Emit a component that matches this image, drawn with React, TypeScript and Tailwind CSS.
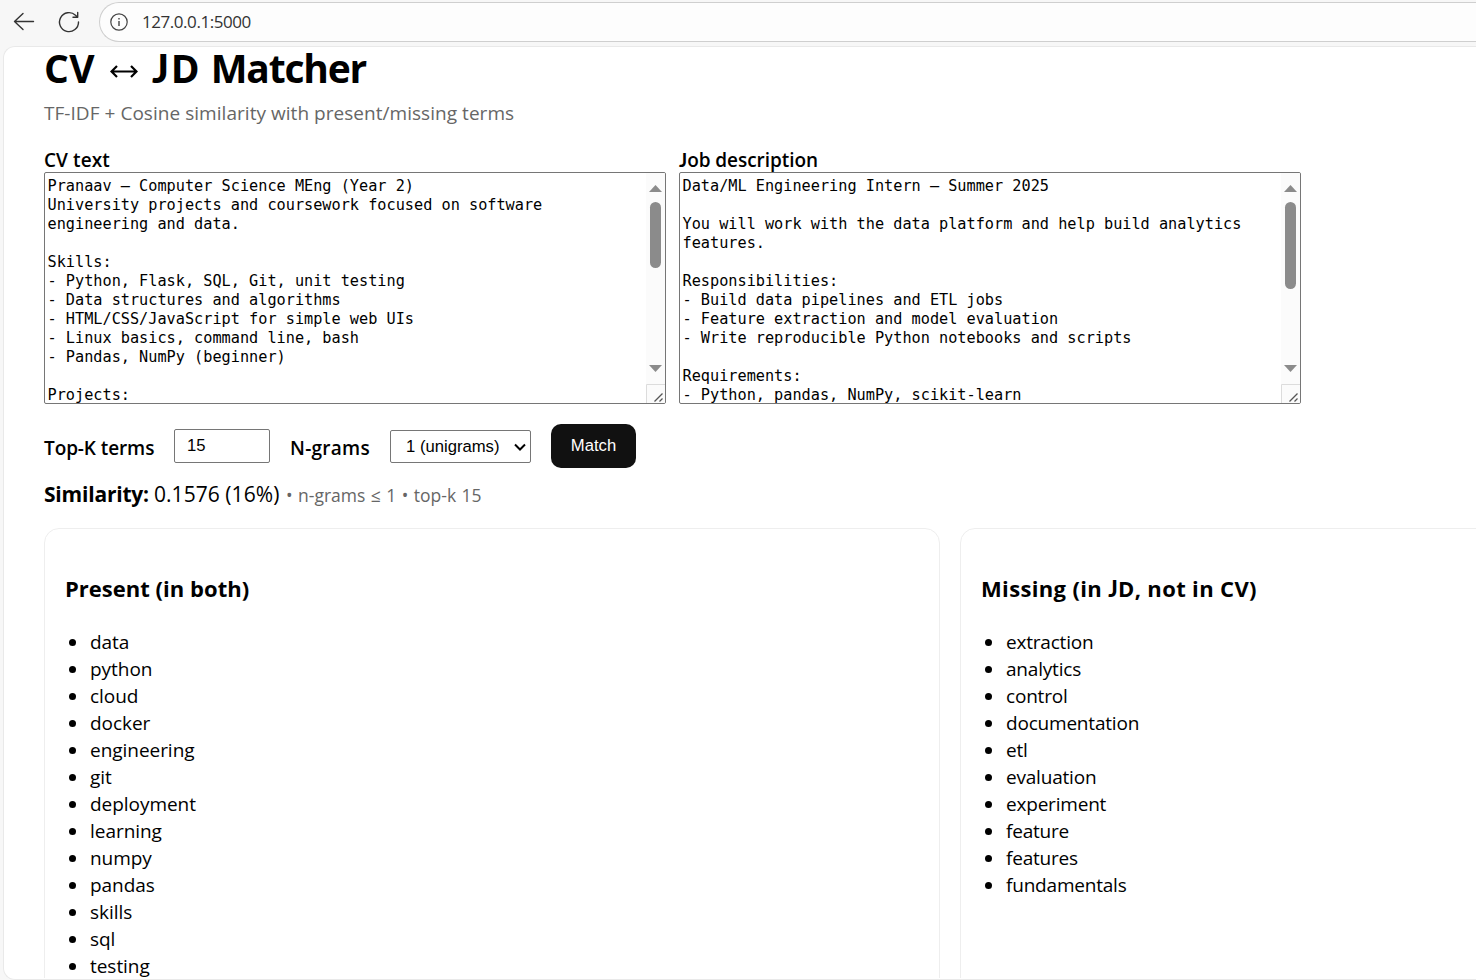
const present = ["data", "python", "cloud", "docker", "engineering", "git", "deployment", "learning", "numpy", "pandas", "skills", "sql", "testing"];
const missing = ["extraction", "analytics", "control", "documentation", "etl", "evaluation", "experiment", "feature", "features", "fundamentals"];

const cvText = `Pranaav – Computer Science MEng (Year 2)
University projects and coursework focused on software
engineering and data.

Skills:
- Python, Flask, SQL, Git, unit testing
- Data structures and algorithms
- HTML/CSS/JavaScript for simple web UIs
- Linux basics, command line, bash
- Pandas, NumPy (beginner)

Projects:`;

const jdText = `Data/ML Engineering Intern – Summer 2025

You will work with the data platform and help build analytics
features.

Responsibilities:
- Build data pipelines and ETL jobs
- Feature extraction and model evaluation
- Write reproducible Python notebooks and scripts

Requirements:
- Python, pandas, NumPy, scikit-learn`;

// A capital J that stays on the baseline, as the other capitals do.
function BaselineJ({ weight }: { weight: string }) {
  return <span className={`font-['Lato',sans-serif] leading-none ${weight}`}>J</span>;
}

function Heading({ text, weight }: { text: string; weight: string }) {
  const at = text.indexOf("J");
  if (at < 0) return <>{text}</>;
  return <>{text.slice(0, at)}<BaselineJ weight={weight} />{text.slice(at + 1)}</>;
}

function TextBox({ label, text, thumb, labelClass }: { label: string; text: string; thumb: string; labelClass: string }) {
  return (
    <div className="w-[622px]">
      <div className={`h-[24px] text-[19px] leading-[25px] font-semibold ${labelClass}`}><Heading text={label} weight="font-bold" /></div>
      <div className="flex h-[232px] overflow-hidden rounded-[2px] border border-[#767676] bg-white">
        <pre className="h-[230px] flex-1 overflow-hidden pt-[4px] pl-[2.5px] font-['DejaVu_Sans_Mono',monospace] text-[15.22px] leading-[19px]">{text}</pre>
        <div className="flex w-[19px] flex-col items-center bg-[#fbfbfb]">
          <svg className="mt-[12px] h-[7px] w-[13px] shrink-0" viewBox="0 0 13 7"><path d="M6.5 0 13 7H0z" fill="#8b8b8b" /></svg>
          <div className={`mt-[10px] w-[11px] shrink-0 rounded-full bg-[#8b8b8b] ${thumb}`} />
          <div className="flex-1" />
          <svg className="mb-[12px] h-[7px] w-[13px] shrink-0" viewBox="0 0 13 7"><path d="M0 0h13L6.5 7z" fill="#8b8b8b" /></svg>
          <svg className="h-[19px] w-[19px] shrink-0" viewBox="0 0 19 19" fill="none">
            <path d="M0.5 19V0.5H19" stroke="#dcdcdc" />
            <path d="M8.5 17.5 16.5 9.5M13.5 17.5 16.5 14.5" stroke="#555" strokeWidth="1.3" />
          </svg>
        </div>
      </div>
    </div>
  );
}

function Card({ title, items, titleClass, listClass }: { title: string; items: string[]; titleClass: string; listClass: string }) {
  return (
    <section className="h-[520px] rounded-[15px] border border-[#eeeeee] pt-[43px] pl-5">
      <h3 className={`h-[32px] text-[22px] leading-[32px] font-bold ${titleClass}`}><Heading text={title} weight="font-black" /></h3>
      <ul className={`mt-[25px] text-[19px] leading-[27px] ${listClass}`}>
        {items.map((item) => (
          <li key={item} className="flex items-center">
            <span className="mr-[14px] ml-[4px] h-[7px] w-[7px] rounded-full bg-black" />
            <span>{item}</span>
          </li>
        ))}
      </ul>
    </section>
  );
}

export default function App() {
  return (
    <div className="h-[980px] w-[1476px] overflow-hidden bg-[#f7f7f7] font-['Open_Sans','Noto_Sans',sans-serif] text-black">
      <header className="flex h-[46px] items-start">
        <svg className="mt-[10px] ml-[12px] h-6 w-6" viewBox="0 0 24 24" fill="none" stroke="#333" strokeWidth="1.4" strokeLinecap="round" strokeLinejoin="round">
          <path d="M21.5 11.5H2.5M11 3.5 2.5 11.5 11 19.5" />
        </svg>
        <svg className="mt-[10px] ml-[21px] h-6 w-6" viewBox="0 0 24 24" fill="none" stroke="#333" strokeWidth="1.4" strokeLinecap="round" strokeLinejoin="round">
          <path d="M21.5 12A9.5 9.5 0 1 1 18.5 5.2L20.5 7M20.7 2.5V7.2H16" />
        </svg>
        <div className="mt-[2px] ml-[18px] flex h-[40px] flex-1 items-center rounded-l-full border border-r-0 border-[#cfcfcf] bg-[#fdfdfd] pl-[10px]">
          <svg className="h-[18px] w-[18px]" viewBox="0 0 18 18" fill="none" stroke="#444" strokeWidth="1.2">
            <circle cx="9" cy="9" r="8.2" /><path d="M9 8v5" strokeWidth="1.4" /><path d="M9 5v1.5" strokeWidth="1.4" />
          </svg>
          <span className="ml-[14px] text-[17px] tracking-[-0.45px] text-[#333]">127.0.0.1:5000</span>
        </div>
      </header>
      <main className="ml-[3px] h-[934px] w-[1473px] rounded-l-[12px] border border-r-0 border-[#e9e9e9] bg-white pl-10">
        <h1 className="flex h-[50px] items-baseline text-[39px] leading-[42px] font-bold">
          <span className="w-[66px] tracking-[0.4px]">CV</span>
          <svg className="mt-[17px] h-[15px] w-[28px] self-start" viewBox="0 0 28 15" fill="none" stroke="#000" strokeWidth="2.2"><path d="M1 7.5h26M7 2 1.5 7.5 7 13M21 2l5.5 5.5L21 13" /></svg>
          <span className="ml-[14px]"><BaselineJ weight="font-black" /></span>
          <span className="ml-[2px]">D</span>
          <span className="ml-[11px] tracking-[-1.2px]">Matcher</span>
        </h1>
        <p className="h-[51px] pt-[3px] text-[19px] leading-[27px] tracking-[0.04px] text-[#666]">TF-IDF + Cosine similarity with present/missing terms</p>
        <div className="flex gap-[13px]">
          <TextBox label="CV text" text={cvText} thumb="h-[66px]" labelClass="tracking-[0.08px]" />
          <TextBox label="Job description" text={jdText} thumb="h-[87px]" labelClass="tracking-[-0.05px]" />
        </div>
        <form className="mt-5 flex h-[44px] items-center text-[19px] font-semibold">
          <label className="w-[130px] pt-[4px] tracking-[-0.1px]">Top-K terms</label>
          <div className="h-[34px] w-[96px] rounded-[2px] border border-[#767676] pl-3 font-['Liberation_Sans',sans-serif] text-[16.67px] leading-[31px] font-normal">15</div>
          <label className="ml-5 w-[100px] pt-[4px] tracking-[0.25px]">N-grams</label>
          <div className="mt-px flex h-[33px] w-[141px] items-center rounded-[2px] border border-[#767676] pl-[15px] font-['Liberation_Sans',sans-serif] text-[16.67px] leading-[31px] font-normal">
            <span>1 (unigrams)</span>
            <svg className="ml-[14px] h-[8px] w-[12px]" viewBox="0 0 12 8" fill="none" stroke="#000" strokeWidth="2"><path d="M1 1.5 6 6.5 11 1.5" /></svg>
          </div>
          <button type="button" className="ml-5 h-[44px] w-[85px] rounded-[10px] bg-[#111] pb-[2px] font-['Liberation_Sans',sans-serif] text-[16.67px] font-normal text-white">Match</button>
        </form>
        <p className="mt-[10px] flex h-[50px] items-baseline text-[21px] leading-[32px]">
          <b className="w-[110px] tracking-[-0.2px]">Similarity:</b>
          <span className="w-[132px] tracking-[0.05px]">0.1576 (16%)</span>
          <span className="text-[17.5px] tracking-[-0.02px] text-[#666] [word-spacing:1px]">• n-grams ≤ 1 • top-k 15</span>
        </p>
        <div className="grid h-[450px] grid-cols-[896px_517px] gap-5 overflow-hidden">
          <Card title="Present (in both)" items={present} titleClass="tracking-[0.02px]" listClass="tracking-[-0.04px]" />
          <div className="overflow-hidden">
            <div className="w-[540px]">
              <Card title="Missing (in JD, not in CV)" items={missing} titleClass="tracking-[0.35px]" listClass="tracking-[-0.2px]" />
            </div>
          </div>
        </div>
      </main>
    </div>
  );
}
